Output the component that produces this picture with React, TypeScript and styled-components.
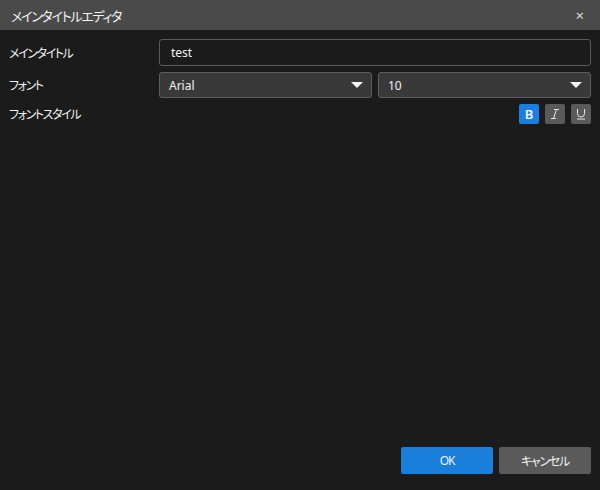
import React, { useState } from "react";
import styled, { createGlobalStyle } from "styled-components";

const GlobalStyle = createGlobalStyle`
    html, body {
        margin:0;
        padding:0;
        background-color:#1b1b1b;
    }
    * {
        box-sizing:border-box;
    }
`;

const ItalicIcon = () => (
    <svg width="12" height="12" viewBox="0 0 12 12" fill="none" stroke="#e6e6e6" strokeWidth="1">
        <path d="M5 1.5h5M2 10.5h5M7.5 1.5L4.5 10.5" />
    </svg>
);

const UnderlineIcon = () => (
    <svg width="12" height="12" viewBox="0 0 12 12" fill="none" stroke="#e6e6e6" strokeWidth="1">
        <path d="M2.5 1v4.5a3.5 3.5 0 0 0 7 0V1M2 11h8" />
    </svg>
);

const App = () => {
    const [title, setTitle] = useState("test");
    const [style, setStyle] = useState({ bold: true, italic: false, underline: false });

    return (
        <>
            <GlobalStyle />
            <Dialog>
                <TitleBar>
                    <span>メインタイトルエディタ</span>
                    <CloseButton>×</CloseButton>
                </TitleBar>

                <Body>
                    <Row>
                        <Label>メインタイトル</Label>
                        <TextInput value={title} onChange={(e) => setTitle(e.target.value)} />
                    </Row>
                    <Row>
                        <Label>フォント</Label>
                        <Selects>
                            <Select>
                                <span>Arial</span>
                                <Caret />
                            </Select>
                            <Select>
                                <span>10</span>
                                <Caret />
                            </Select>
                        </Selects>
                    </Row>
                    <Row>
                        <Label>フォントスタイル</Label>
                        <StyleButtons>
                            <StyleButton active={style.bold} onClick={() => setStyle({ ...style, bold: !style.bold })}>
                                B
                            </StyleButton>
                            <StyleButton active={style.italic} onClick={() => setStyle({ ...style, italic: !style.italic })}>
                                <ItalicIcon />
                            </StyleButton>
                            <StyleButton active={style.underline} onClick={() => setStyle({ ...style, underline: !style.underline })}>
                                <UnderlineIcon />
                            </StyleButton>
                        </StyleButtons>
                    </Row>
                </Body>

                <Footer>
                    <FooterButton primary>OK</FooterButton>
                    <FooterButton>キャンセル</FooterButton>
                </Footer>
            </Dialog>
        </>
    );
};

const Dialog = styled.div`
    width:600px;
    height:490px;
    display:flex;
    flex-direction:column;
    background-color:#1b1b1b;
    color:#f0f0f0;
    font-family:"Noto Sans", "Noto Sans CJK JP", sans-serif;
    font-size:12px;
    font-feature-settings:"palt";
`;

const TitleBar = styled.div`
    height:30px;
    flex-shrink:0;
    display:flex;
    align-items:center;
    justify-content:space-between;
    padding:0 16px 0 11px;
    background-color:#4a4a4a;
    font-size:13px;
    letter-spacing:-1.3px;
    color:#f2f2f2;
`;

const CloseButton = styled.span`
    font-size:15px;
    letter-spacing:0;
    color:#dcdcdc;
    line-height:1;
`;

const Body = styled.div`
    flex:1;
    display:flex;
    flex-direction:column;
    gap:6px;
    padding:9px 9px 0 9px;
`;

const Row = styled.div`
    display:flex;
    align-items:center;
`;

const Label = styled.div`
    width:150px;
    flex-shrink:0;
    letter-spacing:-1.4px;
    color:#f0f0f0;
`;

const TextInput = styled.input`
    flex:1;
    height:27px;
    padding:0 11px;
    border:solid 1px #5a5a5a;
    border-radius:3px;
    background-color:#1b1b1b;
    color:#f0f0f0;
    font-family:inherit;
    font-size:12px;
    outline:none;
`;

const Selects = styled.div`
    flex:1;
    display:flex;
    gap:6px;
`;

const Select = styled.div`
    flex:1;
    height:26px;
    display:flex;
    align-items:center;
    justify-content:space-between;
    padding:0 8px 0 9px;
    border:solid 1px #5e5e5e;
    border-radius:3px;
    background-color:#393939;
`;

const Caret = styled.span`
    width:0;
    height:0;
    border-left:6px solid transparent;
    border-right:6px solid transparent;
    border-top:6px solid #f4f4f4;
`;

const StyleButtons = styled.div`
    flex:1;
    display:flex;
    justify-content:flex-end;
    gap:6px;
`;

const StyleButton = styled.button<{ active?: boolean }>`
    width:20px;
    height:20px;
    padding:0;
    border:none;
    border-radius:2px;
    display:flex;
    align-items:center;
    justify-content:center;
    background-color:${(props) => (props.active ? "#1a7fdf" : "#5a5a5a")};
    color:#f4f4f4;
    font-family:"Noto Sans", sans-serif;
    font-size:13px;
    font-weight:600;
    cursor:pointer;
`;

const Footer = styled.div`
    display:flex;
    justify-content:flex-end;
    gap:6px;
    padding:0 9px 16px 0;
`;

const FooterButton = styled.button<{ primary?: boolean }>`
    width:92px;
    height:27px;
    border:none;
    border-radius:2px;
    background-color:${(props) => (props.primary ? "#1a7fdb" : "#5a5a5a")};
    color:#f2f2f2;
    font-family:inherit;
    font-size:12px;
    font-feature-settings:"palt";
    letter-spacing:-1.2px;
    cursor:pointer;
`;

export default App;
